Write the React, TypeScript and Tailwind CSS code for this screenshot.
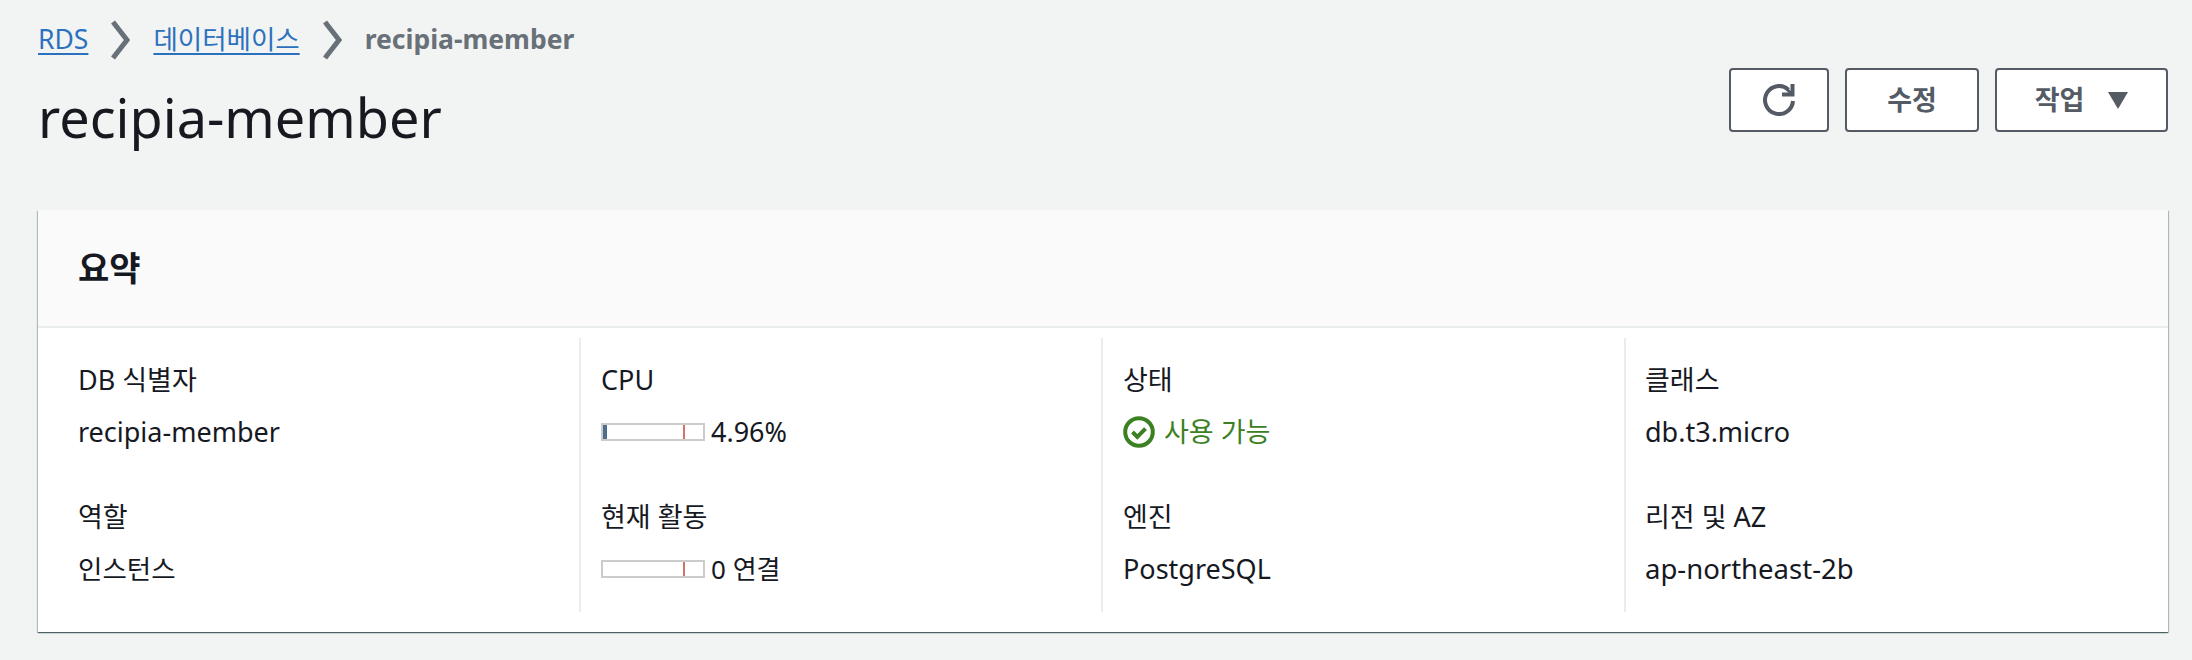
const font = "font-['Noto_Sans','Noto_Sans_CJK_KR',sans-serif]"

function Chevron() {
  return (
    <svg viewBox="0 0 19 40" className="w-[19px] h-[40px] mx-[23px] shrink-0" fill="none" stroke="#687078" strokeWidth="5">
      <path d="M2 2l14 18L2 38" />
    </svg>
  )
}

function Meter({ fill }: { fill?: boolean }) {
  return (
    <div className="relative w-[104px] h-[18px] border-2 border-[#cccccc] bg-white shrink-0">
      {fill && <div className="absolute left-0 top-0 bottom-0 w-[4px] bg-[#4f6d8f]" />}
      <div className="absolute left-[80px] top-0 bottom-0 w-[2px] bg-[#d1736b]" />
    </div>
  )
}

function Field({ label, labelClass, children }: { label: string; labelClass?: string; children: React.ReactNode }) {
  return (
    <div className="h-[69px] mb-[68px] last:mb-0">
      <div className={`text-[27px] leading-[34px] text-[#16191f] ${labelClass ?? ''}`}>{label}</div>
      <div className="mt-[18px] text-[27px] leading-[34px] text-[#16191f] flex items-center">{children}</div>
    </div>
  )
}

function Button({ children, className }: { children: React.ReactNode; className: string }) {
  return (
    <button className={`h-[64px] border-2 border-[#545b64] rounded-[4px] bg-white flex items-center justify-center text-[#545b64] text-[27px] font-bold ${className}`}>
      {children}
    </button>
  )
}

export default function App() {
  return (
    <div className={`w-[2192px] h-[660px] bg-[#f2f3f3] overflow-hidden pl-[38px] pr-[24px] ${font}`}>
      {/* Breadcrumb + title */}
      <div className="flex justify-between items-start h-[210px]">
        <div className="pt-[20px]">
          <div className="flex items-center h-[40px] text-[26.5px]">
            <a className="text-[#2c71bd] underline underline-offset-[4px]">RDS</a>
            <Chevron />
            <a className="text-[#2c71bd] underline underline-offset-[4px]">데이터베이스</a>
            <Chevron />
            <span className="text-[#687078] font-bold">recipia-member</span>
          </div>
          <h1 className="mt-[25px] text-[54px] leading-[64px] text-[#16191f]">recipia-member</h1>
        </div>
        <div className="flex gap-[16px] pt-[68px]">
          <Button className="w-[100px]">
            <svg viewBox="0 0 32 32" className="w-[32px] h-[32px]" fill="none" stroke="#545b64" strokeWidth="4">
              <path d="M30 17A14 14 0 1 1 25.5 5.7" />
              <path d="M29.5 0v10.5H19" />
              <path d="M29.5 10.5L24 5.5" strokeWidth="3" />
            </svg>
          </Button>
          <Button className="w-[134px]">수정</Button>
          <Button className="w-[173px] gap-[24px]">
            <span>작업</span>
            <span className="w-0 h-0 border-l-[10px] border-r-[10px] border-t-[17px] border-l-transparent border-r-transparent border-t-[#545b64]" />
          </Button>
        </div>
      </div>

      {/* Summary card */}
      <div className="h-[422px] bg-white shadow-[0_1px_1px_0_rgba(0,28,36,0.5),1px_1px_1px_0_rgba(0,28,36,0.2),-1px_1px_1px_0_rgba(0,28,36,0.2)]">
        <div className="h-[118px] bg-[#fafafa] border-b-2 border-[#eaeded] pl-[40px] flex items-center">
          <h2 className="text-[34px] font-bold text-[#16191f]">요약</h2>
        </div>
        <div className="grid grid-cols-[543px_522px_523px_1fr] pt-[10px]">
          <div className="h-[274px] pl-[40px] pt-[25px] border-r-2 border-[#eaeded]">
            <Field label="DB 식별자">recipia-member</Field>
            <Field label="역할">
              <span className="text-[26.5px]">인스턴스</span>
            </Field>
          </div>
          <div className="h-[274px] pl-[20px] pt-[25px] border-r-2 border-[#eaeded]">
            <Field label="CPU">
              <Meter fill />
              <span className="ml-[6px]">4.96%</span>
            </Field>
            <Field label="현재 활동" labelClass="text-[26.5px]">
              <Meter />
              <span className="ml-[6px] text-[26px]">0 연결</span>
            </Field>
          </div>
          <div className="h-[274px] pl-[20px] pt-[25px] border-r-2 border-[#eaeded]">
            <Field label="상태">
              <svg viewBox="0 0 32 32" className="w-[32px] h-[32px] mr-[9px] shrink-0" fill="none" stroke="#3b8122" strokeWidth="4">
                <circle cx="16" cy="16" r="13.8" />
                <path d="M9.5 16l4.8 4.8 8.2-8.2" />
              </svg>
              <span className="text-[#3b8122]">사용 가능</span>
            </Field>
            <Field label="엔진">PostgreSQL</Field>
          </div>
          <div className="h-[274px] pl-[19px] pt-[25px]">
            <Field label="클래스" labelClass="text-[26.5px]">db.t3.micro</Field>
            <Field label="리전 및 AZ" labelClass="text-[26.5px]">
              <span className="text-[27.5px]">ap-northeast-2b</span>
            </Field>
          </div>
        </div>
      </div>
    </div>
  )
}
